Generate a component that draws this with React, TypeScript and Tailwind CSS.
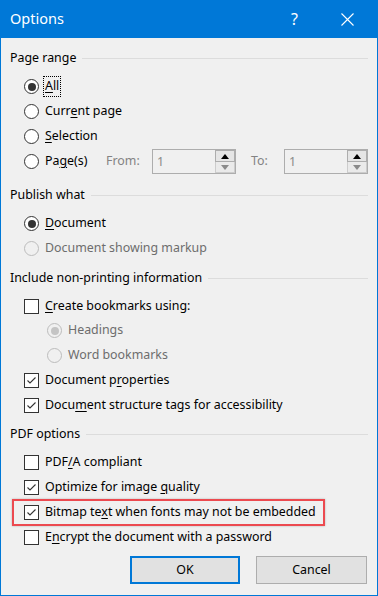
import React from "react";

const font = { fontFamily: '"Segoe UI", "Noto Sans", "Open Sans", sans-serif' };

function Radio({ checked = false, disabled = false }: { checked?: boolean; disabled?: boolean }) {
  return (
    <span
      className={`w-[15px] h-[15px] rounded-full border flex items-center justify-center shrink-0 ${
        disabled ? "border-[#bcbcbc] bg-[#f0f0f0]" : "border-[#333333] bg-white"
      }`}
    >
      {checked && (
        <span className={`w-[8px] h-[8px] rounded-full ${disabled ? "bg-[#c4c4c4]" : "bg-[#333333]"}`} />
      )}
    </span>
  );
}

function Checkbox({ checked = false }: { checked?: boolean }) {
  return (
    <span className="w-[15px] h-[15px] border border-[#333333] bg-white shrink-0 flex items-center justify-center">
      {checked && (
        <svg width="13" height="13" viewBox="0 0 13 13">
          <path d="M2.5 6.5 L5 9 L10.5 3.5" fill="none" stroke="#333" strokeWidth="1.1" />
        </svg>
      )}
    </span>
  );
}

function Header({ title }: { title: string }) {
  return (
    <div className="h-[25px] flex items-center gap-[6px]">
      <span>{title}</span>
      <div className="flex-1 h-px bg-[#dcdcdc]" />
    </div>
  );
}

function Row({ children, indent = false }: { children: React.ReactNode; indent?: boolean }) {
  return (
    <div className={`h-[25px] flex items-center gap-[6px] ${indent ? "pl-[37px]" : "pl-[14px]"}`}>{children}</div>
  );
}

function U({ children }: { children: React.ReactNode }) {
  return <span className="underline underline-offset-2">{children}</span>;
}

function Spin() {
  return (
    <div className="w-[84px] h-[25px] border border-[#adadad] bg-[#f0f0f0] flex">
      <span className="flex-1 pl-[4px] text-[#8a8a8a] leading-[23px]">1</span>
      <div className="w-[20px] flex flex-col">
        <div className="h-[12px] border border-[#adadad] bg-[#e5e5e5] flex items-center justify-center">
          <svg width="8" height="5" viewBox="0 0 8 5">
            <path d="M0 5 L4 0 L8 5 Z" fill="#000" />
          </svg>
        </div>
        <div className="flex-1 border border-t-0 border-[#cccccc] bg-[#eaeaea] flex items-center justify-center">
          <svg width="8" height="5" viewBox="0 0 8 5">
            <path d="M0 0 L4 5 L8 0 Z" fill="#8a8a8a" />
          </svg>
        </div>
      </div>
    </div>
  );
}

export default function App() {
  return (
    <div
      className="w-[378px] h-[596px] bg-[#f0f0f0] border border-t-0 border-[#0078d7] flex flex-col text-[12.4px] text-black"
      style={font}
    >
      <div className="h-[38px] bg-[#0078d7] flex items-center text-white shrink-0">
        <span className="pl-[9px] text-[14.5px] flex-1">Options</span>
        <span className="text-[16px] w-[57px] text-center">?</span>
        <div className="w-[54px] flex items-center justify-center pr-[6px]">
          <svg width="13" height="13" viewBox="0 0 13 13">
            <path d="M0.5 0.5 L12.5 12.5 M12.5 0.5 L0.5 12.5" stroke="#fff" strokeWidth="1.1" />
          </svg>
        </div>
      </div>

      <div className="flex-1 flex flex-col pt-[8px] pl-[9px] pr-[9px]">
        <Header title="Page range" />
        <div className="mt-[3px] pb-[9px]">
          <Row>
            <Radio checked />
            <span className="outline outline-1 outline-dotted outline-black px-[1px] -ml-[1px]">
              <U>A</U>ll
            </span>
          </Row>
          <Row>
            <Radio />
            <span>
              Curr<U>e</U>nt page
            </span>
          </Row>
          <Row>
            <Radio />
            <span>
              <U>S</U>election
            </span>
          </Row>
          <Row>
            <Radio />
            <span className="w-[55px]">
              Pa<U>g</U>e(s)
            </span>
            <span className="text-[#838383] w-[40px]">From:</span>
            <Spin />
            <span className="text-[#838383] w-[27px] ml-[9px]">To:</span>
            <Spin />
          </Row>
        </div>

        <Header title="Publish what" />
        <div className="mt-[3px] pb-[5px]">
          <Row>
            <Radio checked />
            <span>
              <U>D</U>ocument
            </span>
          </Row>
          <Row>
            <Radio disabled />
            <span className="text-[#6d6d6d]">Document showing markup</span>
          </Row>
        </div>

        <Header title="Include non-printing information" />
        <div className="mt-[3px] pb-[4px]">
          <div className="h-[24px] flex items-center gap-[6px] pl-[14px]">
            <Checkbox />
            <span>
              <U>C</U>reate bookmarks using:
            </span>
          </div>
          <Row indent>
            <Radio checked disabled />
            <span className="text-[#6d6d6d]">Headings</span>
          </Row>
          <Row indent>
            <Radio disabled />
            <span className="text-[#6d6d6d]">Word bookmarks</span>
          </Row>
          <Row>
            <Checkbox checked />
            <span>
              Document p<U>r</U>operties
            </span>
          </Row>
          <Row>
            <Checkbox checked />
            <span>
              Docu<U>m</U>ent structure tags for accessibility
            </span>
          </Row>
        </div>

        <Header title="PDF options" />
        <div className="mt-[3px]">
          <Row>
            <Checkbox />
            <span>
              PDF<U>/</U>A compliant
            </span>
          </Row>
          <Row>
            <Checkbox checked />
            <span>
              Optimize for image <U>q</U>uality
            </span>
          </Row>
          <div className="relative">
            <Row>
              <Checkbox checked />
              <span>
                Bitmap te<U>x</U>t when fonts may not be embedded
              </span>
            </Row>
            <span className="absolute left-[2px] top-[-1px] w-[313px] h-[27px] border-2 border-[#ec4a50] shadow-[0_0_2px_rgba(0,0,0,0.25)] pointer-events-none" />
          </div>
          <Row>
            <Checkbox />
            <span>
              E<U>n</U>crypt the document with a password
            </span>
          </Row>
        </div>

        <div className="flex justify-end gap-[16px] mt-[6px] pr-[1px]">
          <button className="w-[110px] h-[28px] border-2 border-[#0078d7] bg-[#e1e1e1]">OK</button>
          <button className="w-[111px] h-[28px] border border-[#adadad] bg-[#e1e1e1]">Cancel</button>
        </div>
      </div>
    </div>
  );
}
